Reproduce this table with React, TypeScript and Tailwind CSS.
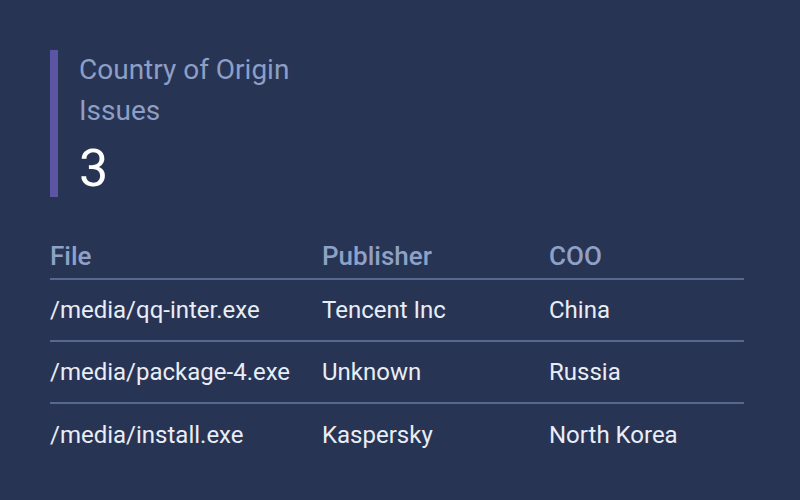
import React from 'react';

const rows = [
  { file: '/media/qq-inter.exe', publisher: 'Tencent Inc', coo: 'China' },
  { file: '/media/package-4.exe', publisher: 'Unknown', coo: 'Russia' },
  { file: '/media/install.exe', publisher: 'Kaspersky', coo: 'North Korea' },
];

const App = () => {
  return (
    <div
      className="w-[800px] h-[500px] bg-[#283454] pl-[50px] pr-[56px] pt-[50px]"
      style={{ fontFamily: 'Roboto, "Noto Sans", sans-serif' }}
    >
      {/* Stat */}
      <div className="flex h-[147px]">
        <div className="w-[8px] bg-[#5b55a4]" />
        <div className="pl-[21px] -mt-[1px]">
          <div className="text-[28px] leading-[41px] text-[#8d9fc5]">
            Country of Origin
            <br />
            Issues
          </div>
          <div className="text-[52px] leading-[52px] text-white mt-[12px]">3</div>
        </div>
      </div>

      {/* Table */}
      <div className="mt-[44px]">
        <div className="grid grid-cols-[272px_227px_1fr] h-[39px] border-b-2 border-[#56688e] text-[26px] font-medium text-[#8fa1c7] leading-[30px]">
          <div>File</div>
          <div>Publisher</div>
          <div>COO</div>
        </div>
        {rows.map((r, i) => (
          <div
            key={r.file}
            className={`grid grid-cols-[272px_227px_1fr] items-center h-[62px] text-[24px] leading-[28px] text-[#e9edf5] ${
              i < rows.length - 1 ? 'border-b-2 border-[#56688e]' : ''
            }`}
          >
            <div>{r.file}</div>
            <div>{r.publisher}</div>
            <div>{r.coo}</div>
          </div>
        ))}
      </div>
    </div>
  );
};

export default App;
